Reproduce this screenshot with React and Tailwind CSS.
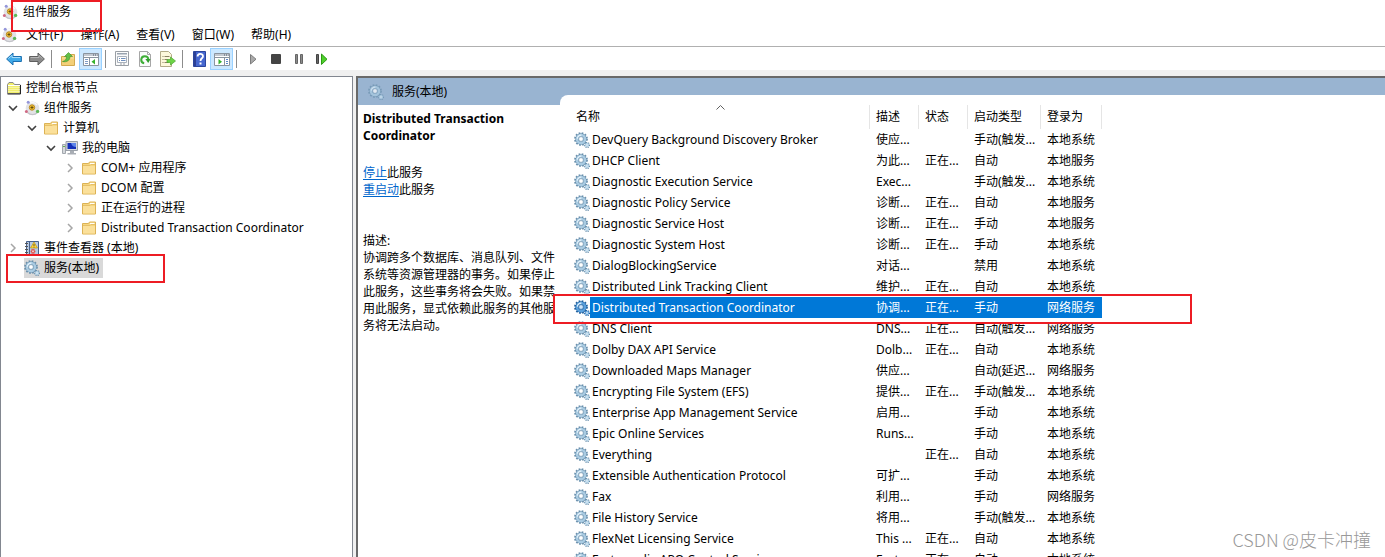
import { clsx } from 'clsx';

const menus = ['文件(F)', '操作(A)', '查看(V)', '窗口(W)', '帮助(H)'];

const services = [
  ['DevQuery Background Discovery Broker', '使应...', '', '手动(触发...', '本地系统'],
  ['DHCP Client', '为此...', '正在...', '自动', '本地服务'],
  ['Diagnostic Execution Service', 'Exec...', '', '手动(触发...', '本地系统'],
  ['Diagnostic Policy Service', '诊断...', '正在...', '自动', '本地服务'],
  ['Diagnostic Service Host', '诊断...', '正在...', '手动', '本地服务'],
  ['Diagnostic System Host', '诊断...', '正在...', '手动', '本地系统'],
  ['DialogBlockingService', '对话...', '', '禁用', '本地系统'],
  ['Distributed Link Tracking Client', '维护...', '正在...', '自动', '本地系统'],
  ['Distributed Transaction Coordinator', '协调...', '正在...', '手动', '网络服务'],
  ['DNS Client', 'DNS...', '正在...', '自动(触发...', '网络服务'],
  ['Dolby DAX API Service', 'Dolb...', '正在...', '自动', '本地系统'],
  ['Downloaded Maps Manager', '供应...', '', '自动(延迟...', '网络服务'],
  ['Encrypting File System (EFS)', '提供...', '正在...', '手动(触发...', '本地系统'],
  ['Enterprise App Management Service', '启用...', '', '手动', '本地系统'],
  ['Epic Online Services', 'Runs...', '', '手动', '本地系统'],
  ['Everything', '', '正在...', '自动', '本地系统'],
  ['Extensible Authentication Protocol', '可扩...', '', '手动', '本地系统'],
  ['Fax', '利用...', '', '手动', '网络服务'],
  ['File History Service', '将用...', '', '手动(触发...', '本地系统'],
  ['FlexNet Licensing Service', 'This ...', '正在...', '自动', '本地系统'],
  ['Fortemedia APO Control Service', 'Forte...', '正在...', '自动', '本地系统'],
];

const selectedService = 'Distributed Transaction Coordinator';

const GearIcon = ({ selected = false, faded = false }) => {
  const dark = selected ? '#1f5f9e' : '#6a90ad';
  const body = selected ? '#5aa0dc' : '#a9cbe2';
  return (
    <svg className={clsx('size-4 shrink-0', faded && 'opacity-70')} viewBox="0 0 16 16" aria-hidden="true">
      <circle cx="7" cy="7" r="6" fill="none" stroke={dark} strokeWidth="1.8" strokeDasharray="1.7 1.442" />
      <circle cx="7" cy="7" r="4.1" fill="none" stroke={dark} strokeWidth="3.2" />
      <circle cx="7" cy="7" r="4" fill="none" stroke={body} strokeWidth="2.6" />
      <path d="M3.4 6.6a3.7 3.7 0 0 1 4-3.4" fill="none" stroke="#e3f2fb" strokeWidth="1.2" />
      <circle cx="7" cy="7" r="2.4" fill={selected ? '#cfe6fa' : '#fff'} stroke={dark} strokeWidth=".7" />
      <circle cx="13" cy="13" r="2.4" fill="none" stroke={dark} strokeWidth="1.4" strokeDasharray="1 .885" />
      <circle cx="13" cy="13" r="1.5" fill="#dcecf6" stroke={body} strokeWidth="1.2" />
    </svg>
  );
};

const ComponentIcon = () => (
  <svg className="size-4 shrink-0" viewBox="0 0 16 16" aria-hidden="true">
    <circle cx="8.5" cy="8.200" r="6.800" fill="#e2e2e5" />
    <path d="M3.500 12.500a7 7 0 0 0 10 0" stroke="#c4c4ca" strokeWidth="1.200" fill="none" />
    <path d="M6 3a6 6 0 0 1 7 2" stroke="#fafafa" strokeWidth="1.400" fill="none" />
    <circle cx="8" cy="7.500" r="2.700" fill="#f3c332" stroke="#b98a22" strokeWidth="1" />
    <path d="M8 6v3M6.500 7.500h3" stroke="#5f450b" strokeWidth=".9" />
    <circle cx="4.200" cy="2.200" r="1.500" fill="#9496da" />
    <circle cx="2.400" cy="11.400" r="1.500" fill="#cf6a84" />
    <circle cx="13.600" cy="11.400" r="1.700" fill="#5cb857" />
  </svg>
);

const FolderIcon = () => (
  <svg className="size-4 shrink-0" viewBox="0 0 16 16" aria-hidden="true">
    <path d="M1.500 3.500h6l1-1.500h6v12h-13z" fill="#f6d680" stroke="#dcb255" />
    <path d="M9 3.500h4.500" stroke="#fff" strokeWidth="1.200" />
    <path d="M2 6h12v7.500H2z" fill="#fbe09a" />
    <path d="M2 5.500h7l1-1h4" fill="none" stroke="#e6c068" />
  </svg>
);

const RootFolderIcon = () => (
  <svg className="size-4 shrink-0" viewBox="0 0 16 16" aria-hidden="true">
    <path d="M1.500 13.500v-9l1.500-2h4l1.500 2h5.500v9z" fill="#f1ee6a" stroke="#8b8b8b" />
    <path d="M2 5.500h12" stroke="#fff" />
    <path d="M2.500 7.500h12M2.500 9.500h12M2.500 11.500h12" stroke="#fffce0" strokeDasharray="1 1" />
    <path d="M1.500 14h13V5" fill="none" stroke="#222" />
  </svg>
);

const ComputerIcon = () => (
  <svg className="size-4 shrink-0" viewBox="0 0 16 16" aria-hidden="true">
    <path d="M.5 4.500h3v9h-3z" fill="#d5d8dc" stroke="#a3a8ae" />
    <path d="M1 6.500h2" stroke="#62b14c" />
    <path d="M4 1.500h11.500v9H4z" fill="#d6dae0" stroke="#9ba1a9" />
    <path d="M5.500 3h8.500v6H5.500z" fill="#1430b8" />
    <path d="M9 3h5v4c-2 0-4-1-5-4z" fill="#5f86ea" />
    <path d="M8 11h4v2h2v1.500H5.500V13H8z" fill="#a9aeb5" />
  </svg>
);

const EventIcon = () => (
  <svg className="size-4 shrink-0" viewBox="0 0 16 16" aria-hidden="true">
    <path d="M2.500 1.500h12v13h-12z" fill="#b9cbe3" stroke="#47618c" />
    <path d="M5.500 2v12" stroke="#47618c" />
    <path d="M1 3.500h3M1 6.500h3M1 9.500h3M1 12.500h3" stroke="#555" />
    <path d="M10 2l3.500 6h-7z" fill="#ffd53a" stroke="#b38a00" strokeWidth=".6" />
    <path d="M10 4v2.200M10 6.800v.7" stroke="#333" strokeWidth=".8" />
    <circle cx="9" cy="11.400" r="2.400" fill="#d8544f" />
    <path d="M8 10.400l2 2m0-2l-2 2" stroke="#fff" strokeWidth=".8" />
  </svg>
);

const Chevron = ({ open }) => (
  <svg className="size-4 shrink-0" viewBox="0 0 16 16" fill="none" aria-hidden="true">
    {open ? (
      <path d="M5 6l4 4 4-4" stroke="#404040" strokeWidth="1.6" />
    ) : (
      <path d="M7 4l4 4-4 4" stroke="#a6a6a6" strokeWidth="1.5" />
    )}
  </svg>
);

const BackIcon = () => (
  <svg className="size-4" viewBox="0 0 16 16" aria-hidden="true">
    <path d="M.6 8l6.400-6v3.500h8.400v5H7V14z" fill="#3fa9e8" stroke="#1c6fb0" />
    <path d="M2.400 7.600L6 4.300v2.200h8.200" fill="none" stroke="#a6dcfa" />
  </svg>
);

const ForwardIcon = () => (
  <svg className="size-4" viewBox="0 0 16 16" aria-hidden="true">
    <path d="M15.400 8L9 2v3.500H.6v5H9V14z" fill="#8b8b8b" stroke="#5f5f5f" />
    <path d="M1.600 6.500H10V4.400L13.500 7.600" fill="none" stroke="#b5b5b5" />
  </svg>
);

const UpFolderIcon = () => (
  <svg className="size-4" viewBox="0 0 16 16" aria-hidden="true">
    <path d="M1.500 5.500h6l1-2h6v11h-13z" fill="#f6d98c" stroke="#d3aa50" />
    <path d="M2 8h12v6H2z" fill="#f3cf78" />
    <path d="M2.500 10.500c3-.5 4-2.500 4-5H4.500L8.500 1.500l4 4H10c0 3.500-2.500 6-7.500 5z" fill="#62c046" stroke="#3c9229" strokeWidth=".6" />
  </svg>
);

const TreePaneIcon = () => (
  <svg className="size-4" viewBox="0 0 16 16" aria-hidden="true">
    <path d="M.5 2.500h15v12H.5z" fill="#fff" stroke="#8a949f" />
    <path d="M1 3h14v2H1z" fill="#c3c9d1" />
    <path d="M10 4h1m1 0h1m1 0h.5" stroke="#4c5664" />
    <path d="M1 6.500h14M6.500 7v7" stroke="#8a949f" />
    <path d="M2 8.500h3M2 10.500h3M2 12.500h3" stroke="#7f9cc5" />
    <path d="M12 8v5.500L8.500 10.700z" fill="#35b22d" />
  </svg>
);

const PropertiesIcon = () => (
  <svg className="size-4" viewBox="0 0 16 16" aria-hidden="true">
    <path d="M1.500.5h13v14h-13z" fill="#fbfbfb" stroke="#9a9fa5" />
    <path d="M3 2h10v1.500H3z" fill="#9aa4b0" />
    <path d="M3.500 5.500h9v6h-9z" fill="#fff" stroke="#a9b1bb" />
    <path d="M5 7.500h1m1 0h4.500M5 9.500h1m1 0h4.500" stroke="#6f8fbd" />
    <path d="M6 13h2m1 0h2" stroke="#9a9fa5" />
  </svg>
);

const RefreshIcon = () => (
  <svg className="size-4" viewBox="0 0 16 16" aria-hidden="true">
    <path d="M2.500.5h8l3 3v12h-11z" fill="#fbfbfb" stroke="#a6a6a6" />
    <path d="M10.500.5v3h3" fill="none" stroke="#a6a6a6" />
    <path d="M7.200 12.300a3.600 3.600 0 1 1 4.200-4" fill="none" stroke="#3fae38" strokeWidth="2" />
    <path d="M13.600 8l-2.400 4L8.400 8z" fill="#2f9e2b" />
  </svg>
);

const ExportIcon = () => (
  <svg className="size-4" viewBox="0 0 16 16" aria-hidden="true">
    <path d="M.5.5h8l3 3v12H.5z" fill="#fdf8dc" stroke="#b3ab88" />
    <path d="M2.500 5.500h1m1 0h5M2.500 8.500h1m1 0h3M2.500 11.500h1m1 0h4" stroke="#8a8063" />
    <path d="M7 8.500h3.500V6l5 4-5 4v-2.500H7z" fill="#6dd446" stroke="#4aa52f" strokeWidth=".7" />
  </svg>
);

const HelpIcon = () => (
  <svg className="size-4" viewBox="0 0 16 16" aria-hidden="true">
    <path d="M2.500.5h12v15h-12z" fill="#4667cf" stroke="#2c469d" />
    <path d="M3 1h2v14H3z" fill="#2c3f94" />
    <path d="M6.600 5.500c0-3.500 5.400-3.300 5.400-.3 0 2.200-2.500 2-2.500 4.800" fill="none" stroke="#fff" strokeWidth="1.800" />
    <path d="M8.500 11.500h2v2h-2z" fill="#fff" />
  </svg>
);

const ActionPaneIcon = () => (
  <svg className="size-4" viewBox="0 0 16 16" aria-hidden="true">
    <path d="M.5 2.500h15v12H.5z" fill="#fff" stroke="#8a949f" />
    <path d="M1 3h14v2H1z" fill="#c3c9d1" />
    <path d="M10 4h1m1 0h1m1 0h.5" stroke="#4c5664" />
    <path d="M1 6.500h14M10.500 7v7" stroke="#8a949f" />
    <path d="M12 8.500h2M12 10.500h2M12 12.500h2" stroke="#5b86c9" />
    <path d="M4.500 8v5.500L8 10.700z" fill="#35b22d" />
  </svg>
);

const StartIcon = () => (
  <svg className="size-4" viewBox="0 0 16 16" aria-hidden="true">
    <path d="M5.500 3.500v9.500L11 8.200z" fill="#a9a9a9" stroke="#7d7d7d" />
  </svg>
);

const StopIcon = () => (
  <svg className="size-4" viewBox="0 0 16 16" aria-hidden="true">
    <rect x="3" y="3" width="10" height="10" rx="1" fill="#444" />
  </svg>
);

const PauseIcon = () => (
  <svg className="size-4" viewBox="0 0 16 16" aria-hidden="true">
    <path d="M4.500 3.500h2v9h-2zM9.500 3.500h2v9h-2z" fill="#8b8b8b" stroke="#666" />
  </svg>
);

const RestartIcon = () => (
  <svg className="size-4" viewBox="0 0 16 16" aria-hidden="true">
    <path d="M2.500 3.500h2v9h-2z" fill="#666" stroke="#444" />
    <path d="M7.500 3v10.500l5.500-5.200z" fill="#4fd02c" stroke="#2a9a12" />
  </svg>
);

const ToolButton = ({ label, icon: Icon, active = false }) => (
  <button
    type="button"
    aria-label={label}
    className={clsx(
      'flex h-[22px] w-[23px] items-center justify-center',
      active && 'border border-[#99d1ff] bg-[#cce8ff]'
    )}
  >
    <Icon />
  </button>
);

const Divider = () => <span className="mr-1 ml-[3px] h-[18px] w-px bg-[#8c8c8c]" />;

const Toolbar = () => (
  <div className="flex h-6 items-center border-t border-[#b0b0b0] bg-white pl-0.5">
    <ToolButton label="后退" icon={BackIcon} />
    <ToolButton label="前进" icon={ForwardIcon} />
    <Divider />
    <ToolButton label="上移一级" icon={UpFolderIcon} />
    <ToolButton label="显示/隐藏控制台树" icon={TreePaneIcon} active />
    <Divider />
    <ToolButton label="属性" icon={PropertiesIcon} />
    <ToolButton label="刷新" icon={RefreshIcon} />
    <ToolButton label="导出列表" icon={ExportIcon} />
    <Divider />
    <ToolButton label="帮助" icon={HelpIcon} />
    <ToolButton label="显示/隐藏操作窗格" icon={ActionPaneIcon} active />
    <Divider />
    <ToolButton label="启动服务" icon={StartIcon} />
    <ToolButton label="停止服务" icon={StopIcon} />
    <ToolButton label="暂停服务" icon={PauseIcon} />
    <ToolButton label="重启动服务" icon={RestartIcon} />
  </div>
);

const TreeItem = ({ indent, open, leaf = false, icon: Icon, label, selected = false }) => (
  <li className={clsx('flex h-5 items-center', indent)}>
    {!leaf && <Chevron open={open} />}
    <button
      type="button"
      className={clsx('flex h-5 items-center gap-1 pr-1 whitespace-nowrap', !leaf && 'ml-1', selected && 'bg-[#d9d9d9]')}
    >
      <Icon />
      {label}
    </button>
  </li>
);

const ConsoleTree = () => (
  <nav className="w-[353px] shrink-0 border-t border-r border-l border-[#828790] bg-white pt-px">
    <ul>
      <TreeItem indent="pl-[5px]" leaf icon={RootFolderIcon} label="控制台根节点" />
      <TreeItem indent="pl-[3px]" open icon={ComponentIcon} label="组件服务" />
      <TreeItem indent="pl-[22px]" open icon={FolderIcon} label="计算机" />
      <TreeItem indent="pl-[41px]" open icon={ComputerIcon} label="我的电脑" />
      <TreeItem indent="pl-[60px]" icon={FolderIcon} label="COM+ 应用程序" />
      <TreeItem indent="pl-[60px]" icon={FolderIcon} label="DCOM 配置" />
      <TreeItem indent="pl-[60px]" icon={FolderIcon} label="正在运行的进程" />
      <TreeItem indent="pl-[60px]" icon={FolderIcon} label="Distributed Transaction Coordinator" />
      <TreeItem indent="pl-[3px]" icon={EventIcon} label="事件查看器 (本地)" />
      <TreeItem indent="pl-[23px]" leaf icon={GearIcon} label="服务(本地)" selected />
    </ul>
  </nav>
);

const ServiceDetails = () => (
  <section className="flex w-[202px] shrink-0 flex-col">
    <h2 className="flex h-[27px] items-center gap-2 pl-[10px]">
      <GearIcon faded />
      服务(本地)
    </h2>
    <div className="flex-1 bg-white pt-[5px] pl-[5px] leading-[17px]">
      <h3 className="font-bold">{selectedService}</h3>
      <p className="mt-5">
        <a href="#stop" className="text-[#0066cc] underline underline-offset-2">停止</a>此服务
      </p>
      <p>
        <a href="#restart" className="text-[#0066cc] underline underline-offset-2">重启动</a>此服务
      </p>
      <p className="mt-[34px]">描述:</p>
      <p className="w-48">
        协调跨多个数据库、消息队列、文件系统等资源管理器的事务。如果停止此服务，这些事务将会失败。如果禁用此服务，显式依赖此服务的其他服务将无法启动。
      </p>
    </div>
  </section>
);

const ServiceTable = () => (
  <section className="mt-[17px] flex-1 overflow-hidden rounded-tl-lg bg-white pt-[10px]">
    <table className="w-[542px] table-fixed border-separate border-spacing-0 whitespace-nowrap">
      <colgroup>
        <col className="w-[310px]" />
        <col className="w-[49px]" />
        <col className="w-[49px]" />
        <col className="w-[73px]" />
        <col className="w-[61px]" />
      </colgroup>
      <thead>
        <tr className="h-6 text-left [&>th]:border-r [&>th]:border-[#e5e5e5] [&>th]:p-0 [&>th]:pl-1.5 [&>th]:font-normal">
          <th>
            <div className="relative pl-[10px]">
              名称
              <svg className="absolute -top-1 left-[150px] h-[5px] w-[9px]" viewBox="0 0 9 5" fill="none" aria-hidden="true">
                <path d="M.5 4.500l4-4 4 4" stroke="#606060" />
              </svg>
            </div>
          </th>
          <th>描述</th>
          <th>状态</th>
          <th>启动类型</th>
          <th>登录为</th>
        </tr>
      </thead>
      <tbody>
        {services.map(([name, ...cells]) => {
          const selected = name === selectedService;
          return (
            <tr key={name} className={clsx('h-[21px]', selected && 'text-white')}>
              <td className="p-0 pl-[14px]">
                <div className="flex h-[21px] items-center">
                  <GearIcon selected={selected} />
                  <span className={clsx('flex h-full flex-1 items-center pl-0.5', selected && 'bg-[#0078d7]')}>
                    {name}
                  </span>
                </div>
              </td>
              {cells.map((cell, i) => (
                <td key={i} className={clsx('p-0 pl-1.5', selected && 'bg-[#0078d7]')}>
                  {cell}
                </td>
              ))}
            </tr>
          );
        })}
      </tbody>
    </table>
  </section>
);

const App = () => {
  return (
    <div className="relative flex h-screen flex-col overflow-hidden bg-[#f0f0f0] font-['Noto_Sans','Noto_Sans_CJK_SC',sans-serif] text-xs text-black">
      <header className="bg-white">
        <h1 className="flex h-[23px] items-center gap-[5px] pl-0.5">
          <ComponentIcon />
          组件服务
        </h1>
        <div className="flex h-[23px] items-center gap-px pl-px">
          <ComponentIcon />
          {menus.map((menu) => (
            <button key={menu} type="button" className="px-2">
              {menu}
            </button>
          ))}
        </div>
      </header>

      <Toolbar />

      <main className="mt-1.5 flex min-h-0 flex-1 gap-[3px]">
        <ConsoleTree />
        <div className="flex min-w-0 flex-1 border-t-2 border-l-2 border-[#696969] bg-[#99b4d1]">
          <ServiceDetails />
          <ServiceTable />
        </div>
      </main>

      <div className="pointer-events-none absolute top-0 left-[11px] h-8 w-[91px] border-2 border-[#ed1c24]" />
      <div className="pointer-events-none absolute top-[254px] left-1.5 h-[29px] w-[159px] border-2 border-[#ed1c24]" />
      <div className="pointer-events-none absolute top-[294px] left-[553px] h-[30px] w-[639px] border-2 border-[#ed1c24]" />

      <p className="absolute right-[14px] bottom-1 font-['Noto_Sans_CJK_SC',sans-serif] text-lg font-light text-[#999]">
        CSDN @皮卡冲撞
      </p>
    </div>
  );
};

export default App;
